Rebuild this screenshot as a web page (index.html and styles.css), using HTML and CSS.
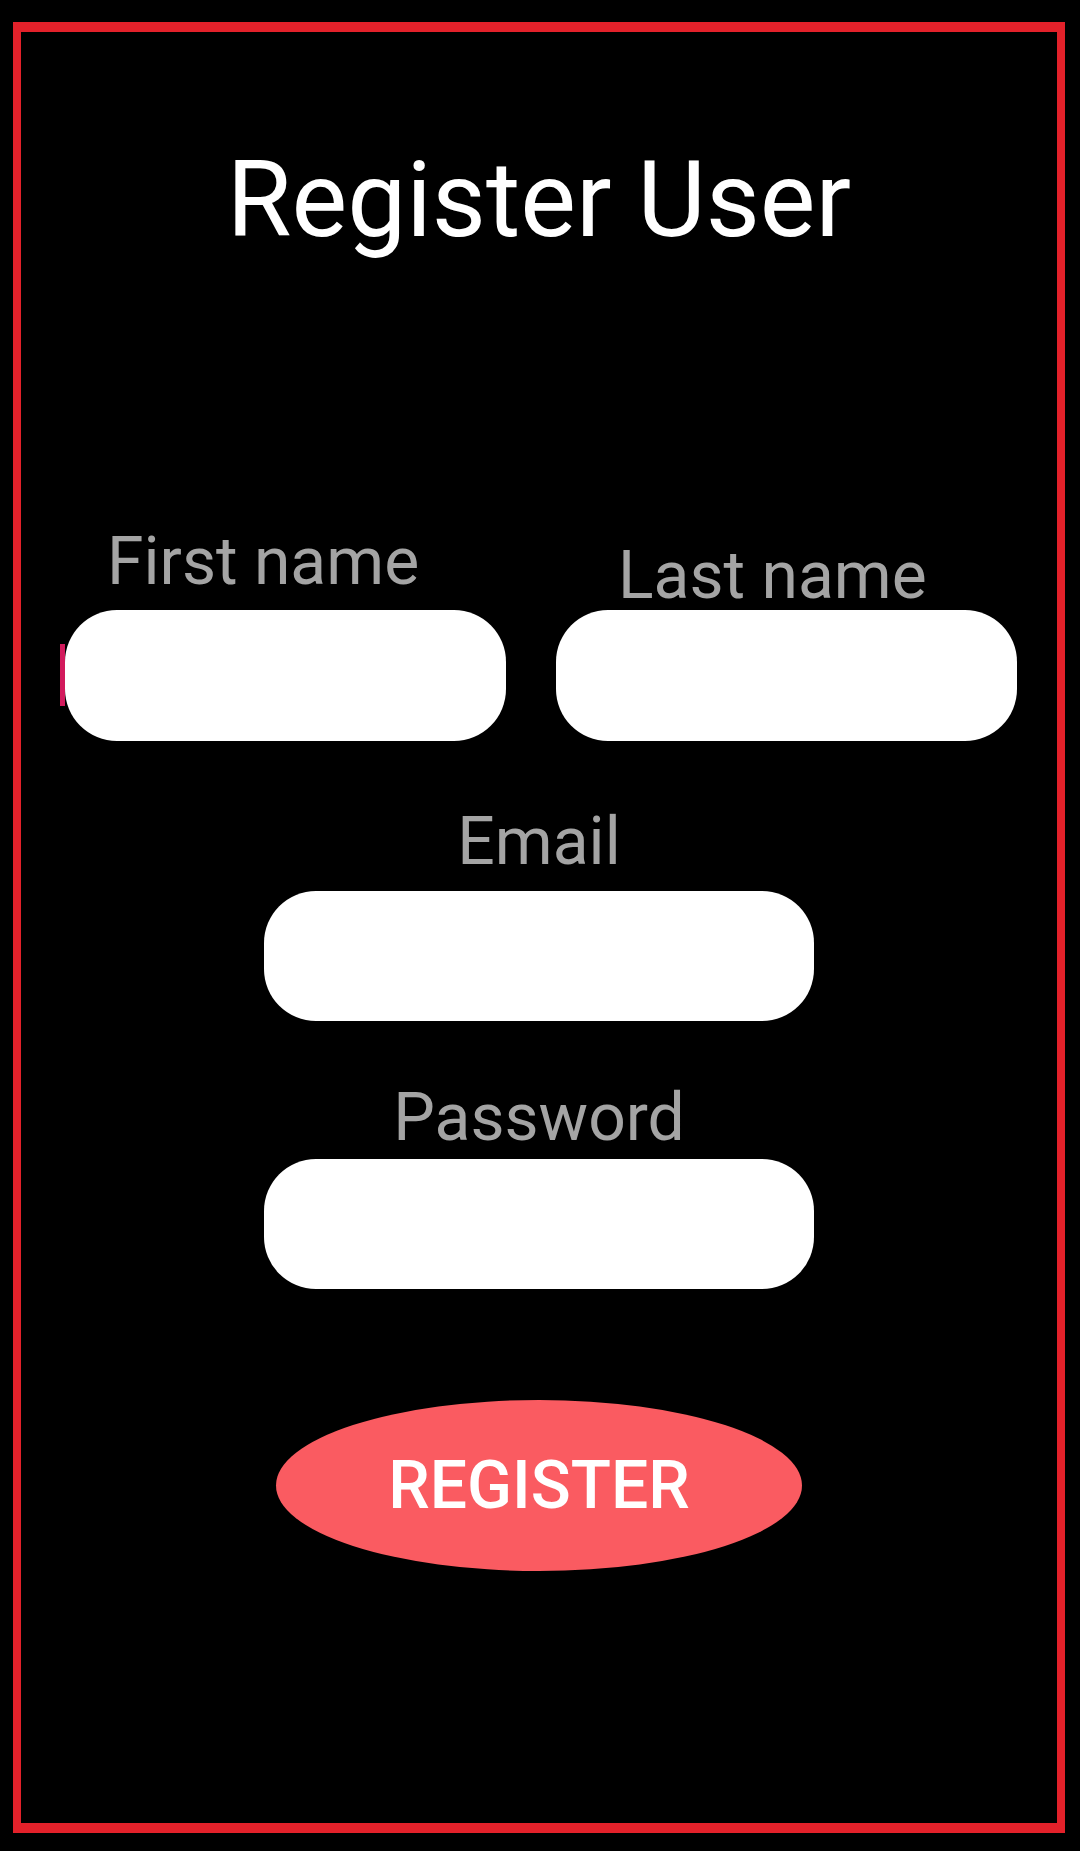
FILE: index.html
```html
<!DOCTYPE html>
<html lang="en">
<head>
<meta charset="utf-8">
<title>Register User</title>
<link rel="stylesheet" href="styles.css">
</head>
<body>
<main class="frame">
  <h1 class="title">Register User</h1>
  <div class="name-row">
    <div class="field">
      <label class="label label-first">First name</label>
      <div class="input-wrap">
        <input class="input" type="text">
        <span class="caret"></span>
      </div>
    </div>
    <div class="field">
      <label class="label label-last">Last name</label>
      <input class="input" type="text">
    </div>
  </div>
  <div class="field field-center field-email">
    <label class="label label-email">Email</label>
    <input class="input input-wide" type="email">
  </div>
  <div class="field field-center field-password">
    <label class="label label-password">Password</label>
    <input class="input input-wide" type="password">
  </div>
  <div class="actions">
    <button class="register" type="button">REGISTER</button>
  </div>
</main>
</body>
</html>
```

FILE: styles.css
```css
html, body {
  margin: 0;
  padding: 0;
  background: #000000;
}

body {
  width: 1080px;
  height: 1851px;
  overflow: hidden;
  font-family: Roboto, "Noto Sans", "Liberation Sans", sans-serif;
}

.frame {
  box-sizing: border-box;
  width: 1052px;
  height: 1811px;
  margin: 22px 0 0 13px;
  border-style: solid;
  border-color: #e3212a;
  border-width: 10px 8px;
  display: flex;
  flex-direction: column;
}

.title {
  margin: 117px 0 0 0;
  font-size: 105px;
  line-height: 104px;
  font-weight: 400;
  color: #ffffff;
  text-align: center;
}

.name-row {
  margin-top: 277px;
  padding: 0 40px 0 44px;
  display: grid;
  grid-template-columns: 441px 461px;
  column-gap: 50px;
  align-items: start;
}

.field {
  display: flex;
  flex-direction: column;
}

.label {
  display: block;
  font-size: 66px;
  line-height: 64px;
  font-weight: 400;
  color: #a4a4a4;
  white-space: nowrap;
}

.label-first {
  margin-bottom: 16px;
  padding-left: 42px;
}

.label-last {
  margin-top: 14px;
  margin-bottom: 2px;
  padding-left: 62px;
}

.input-wrap {
  position: relative;
}

.input {
  box-sizing: border-box;
  display: block;
  width: 100%;
  height: 131px;
  margin: 0;
  padding: 0 40px;
  border: none;
  outline: none;
  border-radius: 52px;
  background: #ffffff;
  font-family: inherit;
  font-size: 48px;
}

.caret {
  position: absolute;
  left: -5px;
  top: 34px;
  width: 5px;
  height: 62px;
  background: #d21a5c;
}

.field-center {
  align-items: center;
}

.field-center .label {
  text-align: center;
}

.input-wide {
  width: 550px;
  height: 130px;
}

.field-email {
  margin-top: 69px;
}

.label-email {
  margin-bottom: 17px;
}

.field-password {
  margin-top: 65px;
}

.label-password {
  margin-bottom: 9px;
}

.actions {
  margin-top: 111px;
  display: flex;
  justify-content: center;
}

.register {
  width: 526px;
  height: 171px;
  margin: 0;
  padding: 0;
  border: none;
  border-radius: 50%;
  background: #fa5b61;
  color: #ffffff;
  font-family: Roboto, "Noto Sans", "Liberation Sans", sans-serif;
  font-size: 66px;
  font-weight: 500;
  line-height: 1;
  display: flex;
  align-items: center;
  justify-content: center;
}
```
